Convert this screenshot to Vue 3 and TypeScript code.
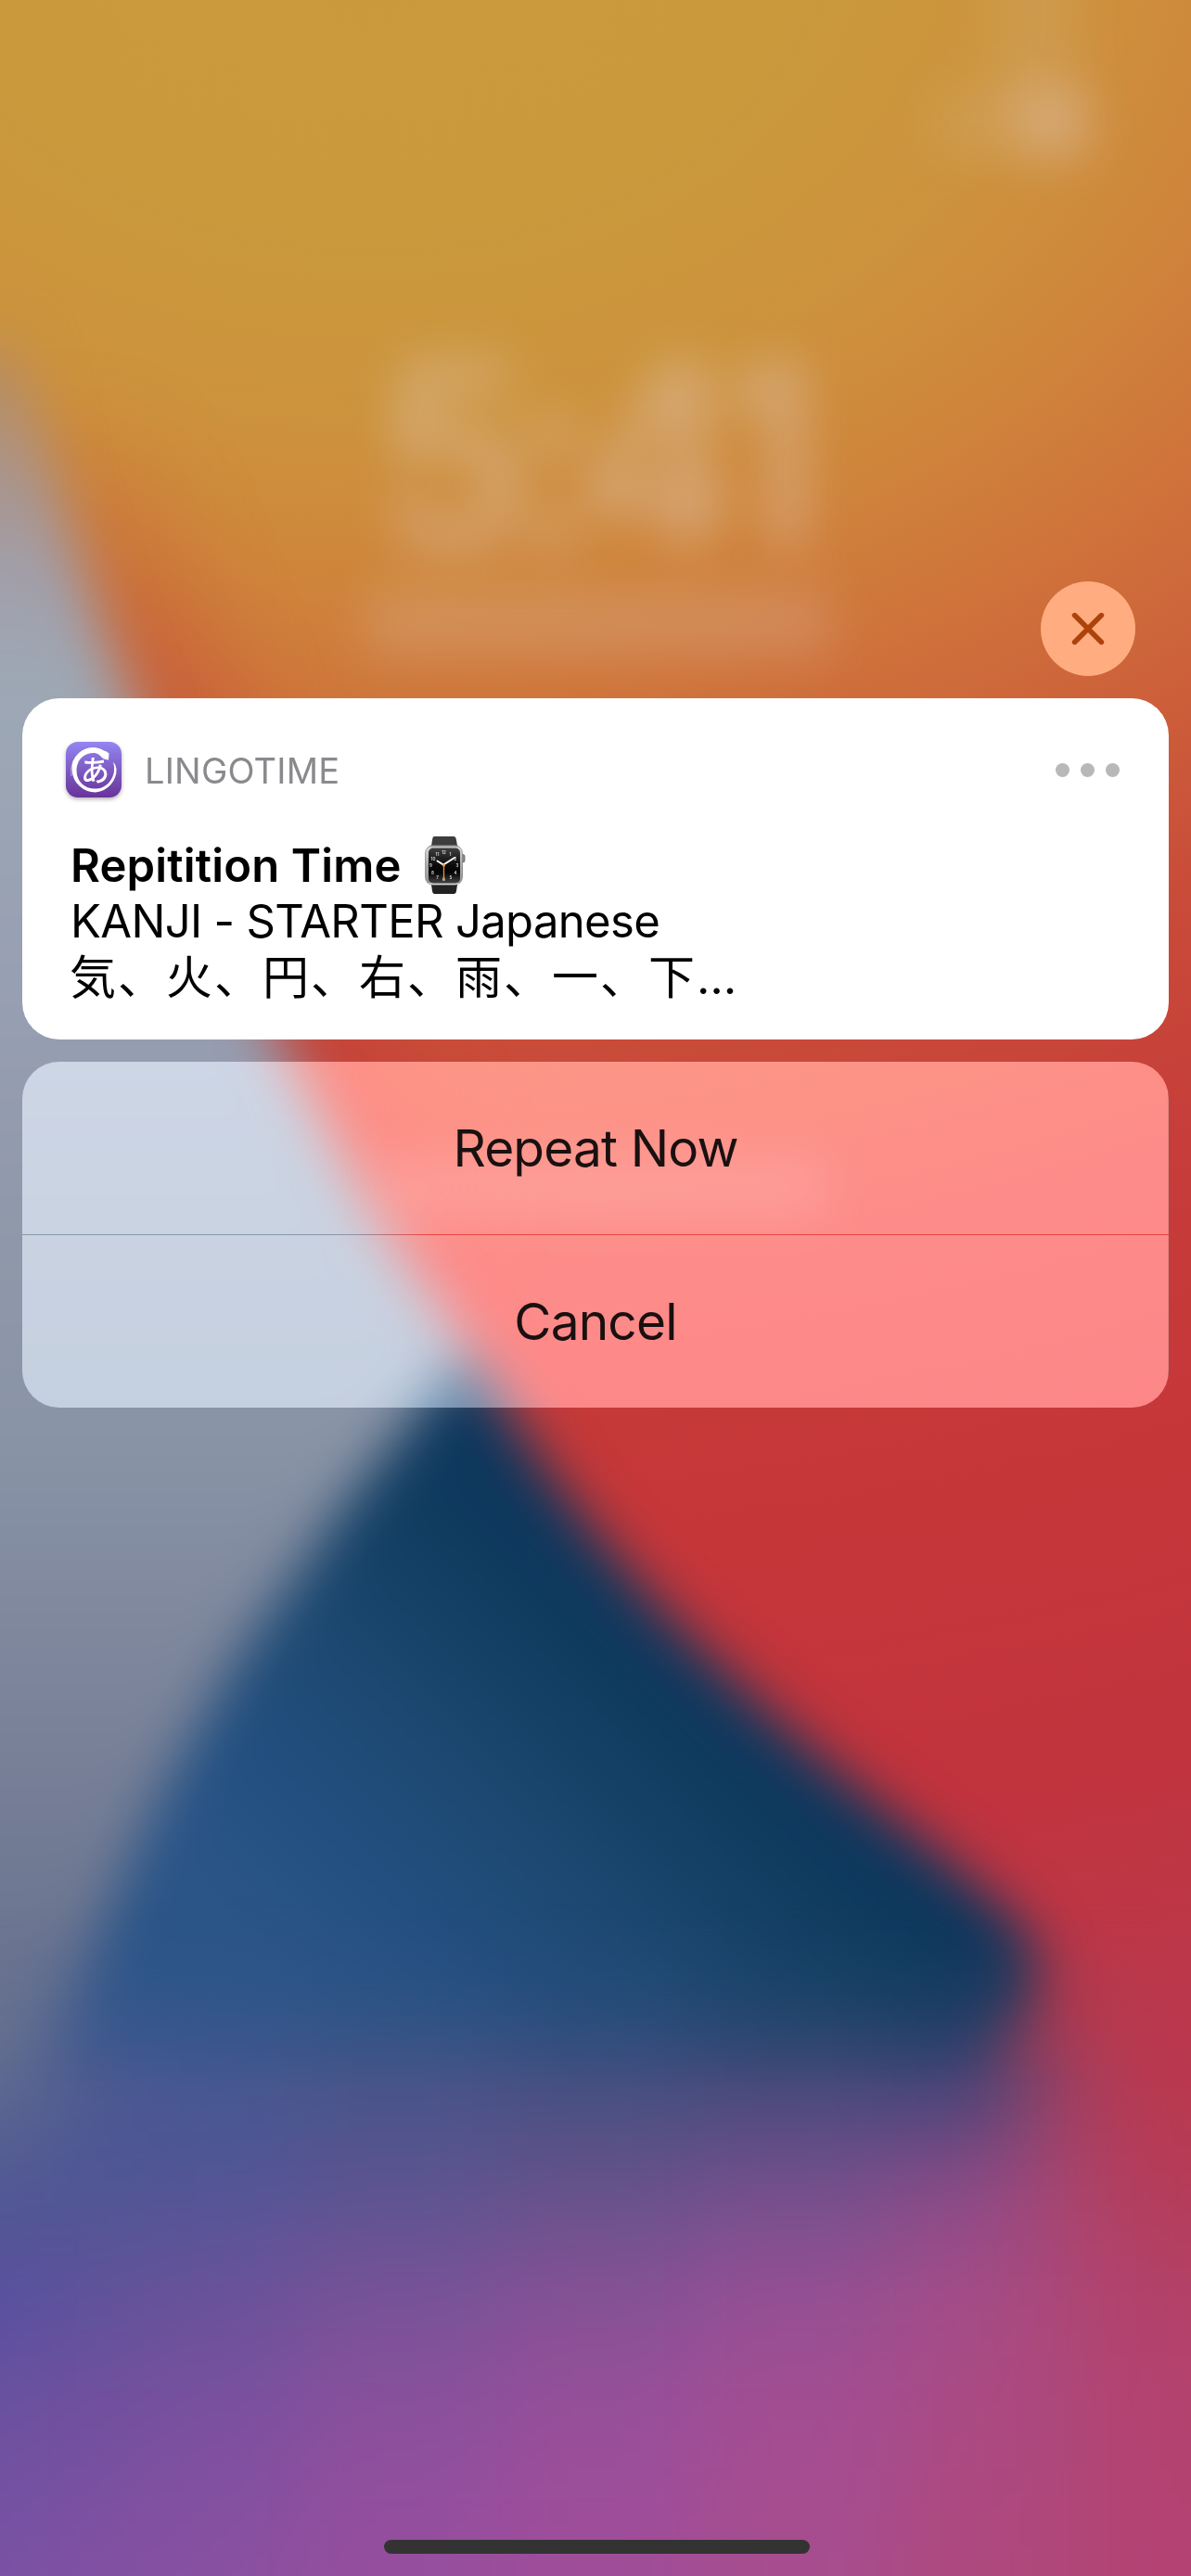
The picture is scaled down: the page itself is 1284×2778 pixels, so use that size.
<script setup lang="ts">
interface NotificationAction {
  id: string
  label: string
}

const actions: NotificationAction[] = [
  { id: 'repeat', label: 'Repeat Now' },
  { id: 'cancel', label: 'Cancel' },
]

// Colour field for the lower part of the wallpaper: one row per 120px band.
const edges = [-200, 50, 160, 321, 535, 749, 963, 1100, 1190, 1500]
const cellHeight = 120
const fieldTop = 2060
const field: string[][] = [
  ['#6c7590', '#3c588f', '#36568b', '#2e527f', '#2a4c78', '#1f4266', '#1c3d62', '#a53a50', '#bd3649'],
  ['#626c8f', '#4a5891', '#45588f', '#475489', '#434f80', '#44497a', '#404476', '#a03f60', '#bb384e'],
  ['#505893', '#4f5694', '#535597', '#5c5490', '#66528b', '#74508b', '#8a4b88', '#a84570', '#b53c58'],
  ['#5850a0', '#60529b', '#6a5299', '#785298', '#865196', '#964f94', '#a44c88', '#ac4778', '#b34168'],
  ['#6a519f', '#72509f', '#7a509f', '#8a509c', '#974f9a', '#a34d92', '#aa4a84', '#ae477a', '#b4426f'],
  ['#7651a3', '#7d50a2', '#8650a0', '#944e9e', '#9e4d9a', '#a64d90', '#ad4980', '#af4779', '#b44272'],
  ['#7c51a5', '#8351a4', '#8c50a2', '#974e9e', '#a04d98', '#a84c8e', '#af487e', '#b04678', '#b34274'],
]

interface Cell {
  x: number
  y: number
  w: number
  h: number
  fill: string
}

const cells: Cell[] = field.flatMap((row, r) =>
  row.map((fill, c) => {
    const bottomExtra = r === field.length - 1 ? 200 : 0
    return {
      x: edges[c],
      y: fieldTop + r * cellHeight,
      w: edges[c + 1] - edges[c] + 1,
      h: cellHeight + 1 + bottomExtra,
      fill,
    }
  }),
)
</script>

<template>
  <main class="screen">
    <svg class="wallpaper" viewBox="0 0 1284 2778" aria-hidden="true">
      <defs>
        <radialGradient
          id="warm"
          gradientUnits="userSpaceOnUse"
          cx="0"
          cy="0"
          r="2900"
          gradientTransform="translate(400 -100) scale(1.35 1)"
        >
          <stop offset="0" stop-color="#c99a3b" />
          <stop offset="0.12" stop-color="#ca993c" />
          <stop offset="0.19" stop-color="#cd933d" />
          <stop offset="0.25" stop-color="#cf853b" />
          <stop offset="0.31" stop-color="#cf713b" />
          <stop offset="0.37" stop-color="#cc5e3a" />
          <stop offset="0.43" stop-color="#c94b39" />
          <stop offset="0.51" stop-color="#c63d3a" />
          <stop offset="0.6" stop-color="#c63739" />
          <stop offset="0.72" stop-color="#c1333d" />
          <stop offset="0.8" stop-color="#bb384a" />
          <stop offset="1" stop-color="#b34374" />
        </radialGradient>
        <linearGradient id="slate" gradientUnits="userSpaceOnUse" x1="0" y1="300" x2="0" y2="2300">
          <stop offset="0" stop-color="#c0893f" />
          <stop offset="0.06" stop-color="#b58e68" />
          <stop offset="0.11" stop-color="#a8958f" />
          <stop offset="0.16" stop-color="#a19fab" />
          <stop offset="0.22" stop-color="#9da8b5" />
          <stop offset="0.38" stop-color="#979fb2" />
          <stop offset="0.5" stop-color="#9099aa" />
          <stop offset="0.62" stop-color="#8a94a7" />
          <stop offset="0.76" stop-color="#7b849a" />
          <stop offset="0.9" stop-color="#6c7590" />
          <stop offset="1" stop-color="#646d8e" />
        </linearGradient>
        <linearGradient id="ocean" gradientUnits="userSpaceOnUse" x1="830" y1="1840" x2="440" y2="2240">
          <stop offset="0" stop-color="#0c355c" />
          <stop offset="0.2" stop-color="#103c60" />
          <stop offset="0.5" stop-color="#1c4871" />
          <stop offset="0.8" stop-color="#235081" />
          <stop offset="1" stop-color="#2b5587" />
        </linearGradient>
        <linearGradient id="ember" gradientUnits="userSpaceOnUse" x1="0" y1="440" x2="0" y2="1400">
          <stop offset="0" stop-color="#c44a3a" stop-opacity="0" />
          <stop offset="0.3" stop-color="#c4503a" stop-opacity="0.5" />
          <stop offset="0.75" stop-color="#c23a3a" stop-opacity="0.5" />
          <stop offset="1" stop-color="#c23a3a" stop-opacity="0" />
        </linearGradient>
        <linearGradient id="fade" gradientUnits="userSpaceOnUse" x1="0" y1="2050" x2="0" y2="2250">
          <stop offset="0" stop-color="#fff" stop-opacity="0" />
          <stop offset="0.5" stop-color="#fff" stop-opacity="0.4" />
          <stop offset="1" stop-color="#fff" />
        </linearGradient>
        <mask id="lower" maskUnits="userSpaceOnUse" x="0" y="2000" width="1284" height="778">
          <rect x="0" y="2000" width="1284" height="778" fill="url(#fade)" />
        </mask>
        <filter
          id="soft"
          filterUnits="userSpaceOnUse"
          color-interpolation-filters="sRGB"
          x="-400"
          y="-200"
          width="2100"
          height="3300"
        >
          <feGaussianBlur stdDeviation="29" />
        </filter>
        <filter
          id="wide"
          filterUnits="userSpaceOnUse"
          color-interpolation-filters="sRGB"
          x="-400"
          y="1800"
          width="2100"
          height="1300"
        >
          <feGaussianBlur stdDeviation="50" />
        </filter>
        <filter
          id="ghost"
          filterUnits="userSpaceOnUse"
          color-interpolation-filters="sRGB"
          x="-100"
          y="-200"
          width="1500"
          height="1800"
        >
          <feGaussianBlur stdDeviation="26" />
        </filter>
      </defs>

      <rect width="1284" height="2778" fill="url(#warm)" />
      <path
        class="ember"
        d="M40 440C62 520 100 640 139 746C190 900 250 1025 303 1125C345 1205 380 1270 440 1360"
        fill="none"
        stroke="url(#ember)"
        stroke-width="210"
      />
      <g filter="url(#soft)">
        <path
          d="M-300 370H18C48 480 92 640 136 746C190 900 250 1025 303 1125C345 1205 380 1270 418 1331L560 1530L300 2330H-300Z"
          fill="url(#slate)"
        />
        <path
          d="M503 1455C545 1520 598 1600 651 1663C712 1738 773 1795 833 1850C893 1905 945 1945 1000 1989L1085 2062C1135 2110 1130 2170 1080 2215L1000 2500H-300V2290H38C58 2235 76 2180 90 2136C110 2075 125 2040 147 1989C168 1940 195 1895 221 1850C258 1780 290 1740 328 1687C360 1635 390 1600 430 1549Z"
          fill="url(#ocean)"
        />
      </g>
      <g mask="url(#lower)">
        <g filter="url(#wide)">
          <rect
            v-for="(cell, i) in cells"
            :key="i"
            :x="cell.x"
            :y="cell.y"
            :width="cell.w"
            :height="cell.h"
            :fill="cell.fill"
          />
        </g>
      </g>
      <g filter="url(#ghost)" fill="#e4d8dc">
        <text class="clock" x="636" y="590" text-anchor="middle" fill-opacity="0.44">5:41</text>
        <rect x="395" y="636" width="500" height="72" fill-opacity="0.19" />
        <rect x="1070" y="-60" width="95" height="170" fill-opacity="0.1" />
        <rect x="1010" y="98" width="160" height="70" fill-opacity="0.12" />
        <rect x="1098" y="96" width="74" height="74" fill-opacity="0.28" />
        <rect x="410" y="1250" width="480" height="62" fill-opacity="0.14" />
      </g>
    </svg>

    <section class="stack">
      <button class="close" type="button" aria-label="Close">
        <svg width="40" height="40" viewBox="0 0 40 40">
          <path d="M5.6 5.6L34.4 34.4M34.4 5.6L5.6 34.4" />
        </svg>
      </button>

      <article class="card">
        <header class="card-head">
          <svg class="app-icon" width="60" height="60" viewBox="0 0 60 60">
            <defs>
              <linearGradient id="tile" x1="0" y1="0" x2="0" y2="1">
                <stop offset="0" stop-color="#9485f3" />
                <stop offset="0.5" stop-color="#7d5cc4" />
                <stop offset="1" stop-color="#69339a" />
              </linearGradient>
            </defs>
            <rect width="60" height="60" rx="13" fill="url(#tile)" />
            <path
              d="M46 19.5L46.5 12.5Q44 10 41 9.5Q36 6 29 6Q20 6.5 14 12Q6.5 18.5 6.5 29Q7 41 14.5 47.5Q22 54.5 32 54.5Q42 53.5 48.5 46Q55 38.5 54.5 29Q53.5 24 51 21.5Q52.5 27 52 32Q50.5 40 45.5 45Q39.5 50.5 32 50.5Q22.5 50.5 17 45Q11.5 39.5 11.5 30Q12 21 18 16Q24 11.5 31 12Q35 12.5 37 15Q40 19 46 19.5Z"
              fill="#fff"
            />
            <path d="M6 37Q4.5 28 8 20M19 11Q24 7.5 31 8.5" fill="none" stroke="#fff" stroke-opacity="0.5" />
            <text class="glyph" x="31.5" y="42" text-anchor="middle">あ</text>
          </svg>
          <span class="app-name">LINGOTIME</span>
          <span class="more"><i></i><i></i><i></i></span>
        </header>
        <h1 class="title">
          <span class="title-text">Repitition Time</span>
          <svg class="watch" width="44" height="62" viewBox="0 0 44 62">
            <defs>
              <linearGradient id="steel" x1="0" y1="0" x2="0" y2="1">
                <stop offset="0" stop-color="#777" />
                <stop offset="0.06" stop-color="#d8d8d8" />
                <stop offset="0.5" stop-color="#aaa" />
                <stop offset="0.93" stop-color="#999" />
                <stop offset="0.97" stop-color="#eee" />
                <stop offset="1" stop-color="#777" />
              </linearGradient>
              <linearGradient id="face" x1="0" y1="0" x2="0" y2="1">
                <stop offset="0" stop-color="#3f3f3f" />
                <stop offset="0.5" stop-color="#0a0a0a" />
                <stop offset="0.7" stop-color="#050505" />
                <stop offset="1" stop-color="#444" />
              </linearGradient>
            </defs>
            <path d="M10 0H31Q33.5 0 34 4L35 10H7L8 4Q8.5 0 10 0Z" fill="#3d3d3d" />
            <path d="M7 52H35L34 59Q33.5 62 31 62H10Q8.5 62 8 59Z" fill="#222" />
            <rect x="38" y="19.5" width="5" height="8.5" rx="2" fill="#888" stroke="#555" stroke-width="0.7" />
            <rect x="39" y="32" width="2" height="12" rx="1" fill="#bbb" />
            <rect x="0.5" y="9.5" width="40" height="43" rx="8.5" fill="url(#steel)" stroke="#777" stroke-width="0.6" />
            <rect x="4" y="12.5" width="34" height="38" rx="5" fill="url(#face)" />
            <g class="hours">
              <text x="20.5" y="19">12</text>
              <text x="27.5" y="20.5">1</text>
              <text x="33" y="26">2</text>
              <text x="35" y="33">3</text>
              <text x="33" y="40.5">4</text>
              <text x="28" y="45.5">5</text>
              <text x="20.5" y="47.5">6</text>
              <text x="13.5" y="45.5">7</text>
              <text x="8.5" y="40.5">8</text>
              <text x="6.5" y="33">9</text>
              <text x="9" y="26">10</text>
              <text x="13.5" y="20.5">11</text>
            </g>
            <path d="M20.5 31V47" stroke="#e09a2c" stroke-width="1.3" />
            <path d="M13.5 26.5L20 30.5L32 23" fill="none" stroke="#fff" stroke-width="2" stroke-linecap="round" />
            <circle cx="20.5" cy="31" r="1.6" fill="#e0a040" />
          </svg>
        </h1>
        <p class="subtitle">KANJI - STARTER Japanese</p>
        <p class="kanji">気、火、円、右、雨、一、下…</p>
      </article>

      <div class="actions">
        <button v-for="action in actions" :key="action.id" class="action" :class="action.id" type="button">
          <span>{{ action.label }}</span>
        </button>
      </div>
    </section>

    <div class="home-bar"></div>
  </main>
</template>

<style>
html,
body {
  margin: 0;
  background: #c63739;
}
</style>

<style scoped>
.screen {
  position: relative;
  display: flex;
  flex-direction: column;
  justify-content: space-between;
  box-sizing: border-box;
  width: 1284px;
  height: 2778px;
  padding: 627px 24px 24px;
  overflow: hidden;
  font-family: Inter, 'Noto Sans CJK JP', sans-serif;
}

.wallpaper {
  position: absolute;
  top: 0;
  left: 0;
  width: 1284px;
  height: 2778px;
}

.ember {
  filter: blur(45px);
}

.clock {
  font-family: Inter, sans-serif;
  font-size: 272px;
  font-weight: 500;
  letter-spacing: -18px;
}

.stack {
  position: relative;
  display: flex;
  flex-direction: column;
  gap: 24px;
}

button {
  margin: 0;
  padding: 0;
  border: 0;
  background: none;
  font-family: inherit;
}

.close {
  display: flex;
  align-items: center;
  justify-content: center;
  align-self: flex-end;
  width: 102px;
  height: 102px;
  margin-right: 36px;
  border-radius: 50%;
  background: #ffad80;
}

.close path {
  fill: none;
  stroke: #ad430b;
  stroke-width: 5.6;
  stroke-linecap: round;
}

.card {
  display: flex;
  flex-direction: column;
  box-sizing: border-box;
  height: 368px;
  padding: 47px 53px 0 47px;
  border-radius: 40px;
  background: #fff;
  color: #000;
}

.card-head {
  display: flex;
  align-items: center;
  height: 60px;
}

.app-icon {
  overflow: visible;
  filter: drop-shadow(0 2px 2px rgba(0, 0, 0, 0.3));
}

.glyph {
  fill: #fff;
  font-family: 'Noto Sans CJK JP', sans-serif;
  font-size: 31px;
  font-weight: 500;
}

.app-name {
  margin-left: 25px;
  color: #8a8a8e;
  font-size: 38px;
  line-height: 60px;
  letter-spacing: 0.2px;
  transform: translateY(1px);
}

.more {
  display: flex;
  gap: 12px;
  margin-left: auto;
}

.more i {
  width: 15px;
  height: 15px;
  border-radius: 50%;
  background: #b8b8ba;
}

.title {
  display: flex;
  align-items: center;
  height: 61px;
  margin: 42px 0 0 5px;
  font-size: 49px;
  font-weight: 600;
  line-height: 61px;
  white-space: nowrap;
}

.title-text {
  width: 382px;
  letter-spacing: 0.15px;
  transform: translateY(1px);
}

.watch {
  flex: none;
}

.hours text {
  fill: #ddd;
  font-size: 4.5px;
  font-weight: 600;
  text-anchor: middle;
}

.subtitle {
  height: 61px;
  margin: 0 0 0 5px;
  font-size: 49px;
  line-height: 61px;
  letter-spacing: -0.66px;
  white-space: nowrap;
}

.kanji {
  height: 61px;
  margin: 0 0 0 4px;
  font-size: 50px;
  font-weight: 400;
  line-height: 61px;
  letter-spacing: 2px;
  white-space: nowrap;
}

.actions {
  display: flex;
  flex-direction: column;
  height: 373px;
  overflow: hidden;
  border-radius: 40px;
  background: rgba(250, 254, 255, 0.385);
  backdrop-filter: saturate(1.15) brightness(1.2);
}

.action {
  flex: 1;
  color: #1a1010;
  font-size: 55px;
  line-height: 66px;
  letter-spacing: -0.85px;
}

.action + .action {
  border-top: 1px solid;
  border-image: linear-gradient(to right, #8796aa 29%, #ea463f 35%) 1;
}

.home-bar {
  position: relative;
  align-self: center;
  width: 459px;
  height: 15px;
  margin-left: 3px;
  border-radius: 8px;
  background: #333;
}
</style>
